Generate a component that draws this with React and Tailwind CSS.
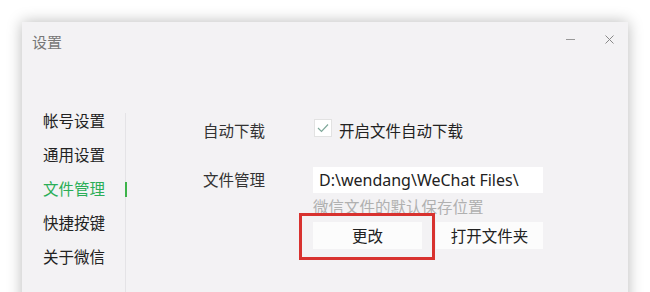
const cjk = { fontFamily: '"Noto Sans CJK SC", "Noto Sans", sans-serif' };

const menu = ["帐号设置", "通用设置", "文件管理", "快捷按键", "关于微信"];

function SideItem({ label, active }) {
  return (
    <div
      className={`relative h-[34px] flex items-center pl-[21px] text-[15.5px] ${
        active ? "text-[#2aae57]" : "text-[#222]"
      }`}
    >
      {label}
      {active && (
        <span className="absolute right-[-2px] top-[10px] w-[2px] h-[15px] bg-[#3cb34a]" />
      )}
    </div>
  );
}

export default function App() {
  return (
    <div className="h-[292px] overflow-hidden bg-white pt-[22px] pl-[22px]" style={cjk}>
      <div className="w-[606px] h-[300px] bg-[#f3f2f4] shadow-[0_0_14px_rgba(0,0,0,0.28)] flex flex-col">
        {/* title bar */}
        <div className="h-[82px] flex items-start justify-between">
          <div className="ml-[10px] mt-[9px] text-[15px] text-[#777]">设置</div>
          <div className="flex items-center mt-[13px] mr-[14px] gap-[30px]">
            <span className="block w-[9px] h-px bg-[#999]" />
            <svg width="9" height="9" viewBox="0 0 9 9" className="text-[#888]">
              <path d="M0.5 0.5 L8.5 8.5 M8.5 0.5 L0.5 8.5" stroke="currentColor" strokeWidth="1" />
            </svg>
          </div>
        </div>

        {/* body */}
        <div className="flex flex-1">
          <div className="w-[103px]">
            {menu.map((m) => (
              <SideItem key={m} label={m} active={m === "文件管理"} />
            ))}
          </div>
          <div className="w-px mt-[9px] bg-[#e4e3e6]" />

          <div className="flex-1 pt-[9px]">
            <div className="flex items-center h-[36px]">
              <div className="w-[139px] text-right text-[15.5px] text-[#333]">自动下载</div>
              <div className="ml-[49px] w-[18px] h-[18px] -mt-[6px] bg-white border border-[#e2e2e2] flex items-center justify-center">
                <svg width="12" height="10" viewBox="0 0 12 10">
                  <path d="M1 5 L4.5 8.5 L11 1.5" fill="none" stroke="#7fa89a" strokeWidth="1.2" />
                </svg>
              </div>
              <div className="ml-[7px] text-[15.5px] text-[#222]">开启文件自动下载</div>
            </div>

            <div className="flex items-center h-[26px] mt-[18px]">
              <div className="w-[139px] text-right text-[15.5px] text-[#333]">文件管理</div>
              <div
                className="ml-[48px] w-[230px] h-[26px] bg-white flex items-center pl-[6px] text-[16px] text-[#222]"
                style={{ fontFamily: '"Noto Sans", "Noto Sans CJK SC", sans-serif' }}
              >
                D:\wendang\WeChat Files\
              </div>
            </div>

            <div className="ml-[187px]">
              <div className="mt-[5px] leading-[16px] text-[15.5px] text-[#b0b0b0]">微信文件的默认保存位置</div>
              <div className="flex gap-[14px] mt-[8px]">
                <div className="relative">
                  <div className="w-[109px] h-[27px] bg-[#fcfcfc] flex items-center justify-center text-[15.5px] text-[#222]">
                    更改
                  </div>
                  <span className="absolute left-[-14px] top-[-9px] w-[136px] h-[47px] border-[3px] border-[#d8322f]" />
                </div>
                <div className="w-[107px] h-[27px] bg-[#fcfcfc] flex items-center justify-center text-[15.5px] text-[#222]">
                  打开文件夹
                </div>
              </div>
            </div>
          </div>
        </div>
      </div>
    </div>
  );
}
